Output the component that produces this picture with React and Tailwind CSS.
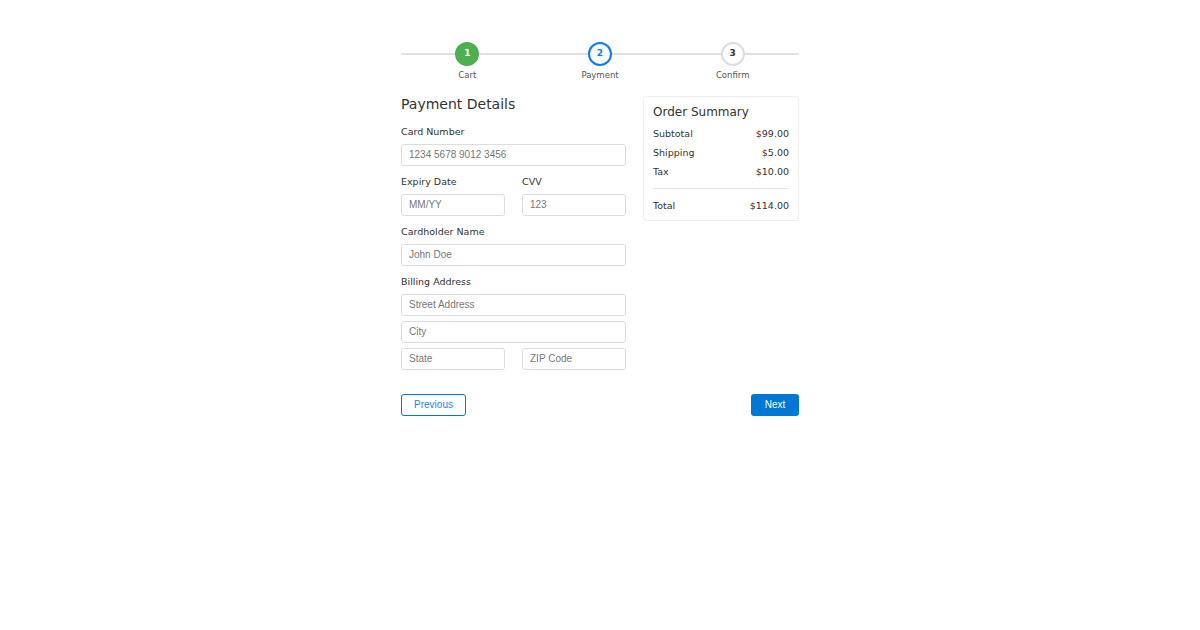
import React from 'react';

const steps = [
  { n: 1, label: 'Cart', state: 'done' },
  { n: 2, label: 'Payment', state: 'active' },
  { n: 3, label: 'Confirm', state: 'todo' },
];

const circleCls = {
  done: 'bg-[#4caf50] border-[#4caf50] text-white',
  active: 'bg-white border-[#0a7cf0] text-[#0a7cf0]',
  todo: 'bg-white border-[#ddd] text-[#333]',
};

const Field = ({ placeholder, className = '' }) => (
  <input
    placeholder={placeholder}
    className={`block h-[22px] border border-[#ddd] rounded-[3px] pl-[7px] pr-2 text-[10px] text-[#333] placeholder:text-[#777] outline-none ${className}`}
    style={{ fontFamily: '"Liberation Sans", Arial, sans-serif' }}
  />
);

const Label = ({ children }) => (
  <div className="text-[9.5px] text-[#333] leading-[10px] mb-[7px]">{children}</div>
);

const Row = ({ label, value }) => (
  <div className="flex justify-between text-[9.5px] text-[#333] leading-[19px]">
    <span>{label}</span>
    <span>{value}</span>
  </div>
);

const App = () => {
  return (
    <div
      className="min-h-[630px] bg-white flex justify-center pt-[42px]"
      style={{ fontFamily: '"DejaVu Sans", Verdana, sans-serif' }}
    >
      <div className="w-[398px]">
        <div className="relative flex">
          <div className="absolute left-0 right-0 top-[11px] h-[2px] bg-[#e0e0e0]" />
          {steps.map((s) => (
            <div key={s.n} className="relative flex-1 flex flex-col items-center">
              <div
                className={`w-[24px] h-[24px] rounded-full border-2 flex items-center justify-center text-[9px] font-bold ${circleCls[s.state]}`}
              >
                {s.n}
              </div>
              <div className="mt-[5px] text-[8.5px] text-[#555] leading-none">{s.label}</div>
            </div>
          ))}
        </div>

        <div className="flex justify-between mt-[10px]">
          <div className="w-[225px]">
            <h2 className="text-[14px] text-[#333] leading-[14px] mt-[7px] mb-[16px]">Payment Details</h2>

            <Label>Card Number</Label>
            <Field placeholder="1234 5678 9012 3456" className="w-full" />

            <div className="flex justify-between mt-[11px]">
              <div className="w-[104px]">
                <Label>Expiry Date</Label>
                <Field placeholder="MM/YY" className="w-full" />
              </div>
              <div className="w-[104px]">
                <Label>CVV</Label>
                <Field placeholder="123" className="w-full" />
              </div>
            </div>

            <div className="mt-[11px]">
              <Label>Cardholder Name</Label>
              <Field placeholder="John Doe" className="w-full" />
            </div>

            <div className="mt-[11px]">
              <Label>Billing Address</Label>
              <div className="flex flex-col gap-[5px]">
                <Field placeholder="Street Address" className="w-full" />
                <Field placeholder="City" className="w-full" />
                <div className="flex justify-between">
                  <Field placeholder="State" className="w-[104px]" />
                  <Field placeholder="ZIP Code" className="w-[104px]" />
                </div>
              </div>
            </div>
          </div>

          <div className="w-[156px] self-start mt-[6px] border border-[#eee] rounded-[3px] px-[9px] pt-[9px] pb-[5px]">
            <h3 className="text-[12px] text-[#333] leading-[12px] mb-[6px]">Order Summary</h3>
            <Row label="Subtotal" value="$99.00" />
            <Row label="Shipping" value="$5.00" />
            <Row label="Tax" value="$10.00" />
            <div className="border-t border-[#e5e5e5] mt-[7px] mb-[7px]" />
            <Row label="Total" value="$114.00" />
          </div>
        </div>

        <div
          className="flex justify-between mt-[24px]"
          style={{ fontFamily: '"Liberation Sans", Arial, sans-serif' }}
        >
          <button className="h-[22px] w-[65px] border border-[#0078d4] rounded-[3px] bg-white text-[#1a86e0] text-[10px]">
            Previous
          </button>
          <button className="h-[22px] w-[48px] rounded-[3px] bg-[#0078d4] text-white text-[10px]">
            Next
          </button>
        </div>
      </div>
    </div>
  );
};

export default App;
